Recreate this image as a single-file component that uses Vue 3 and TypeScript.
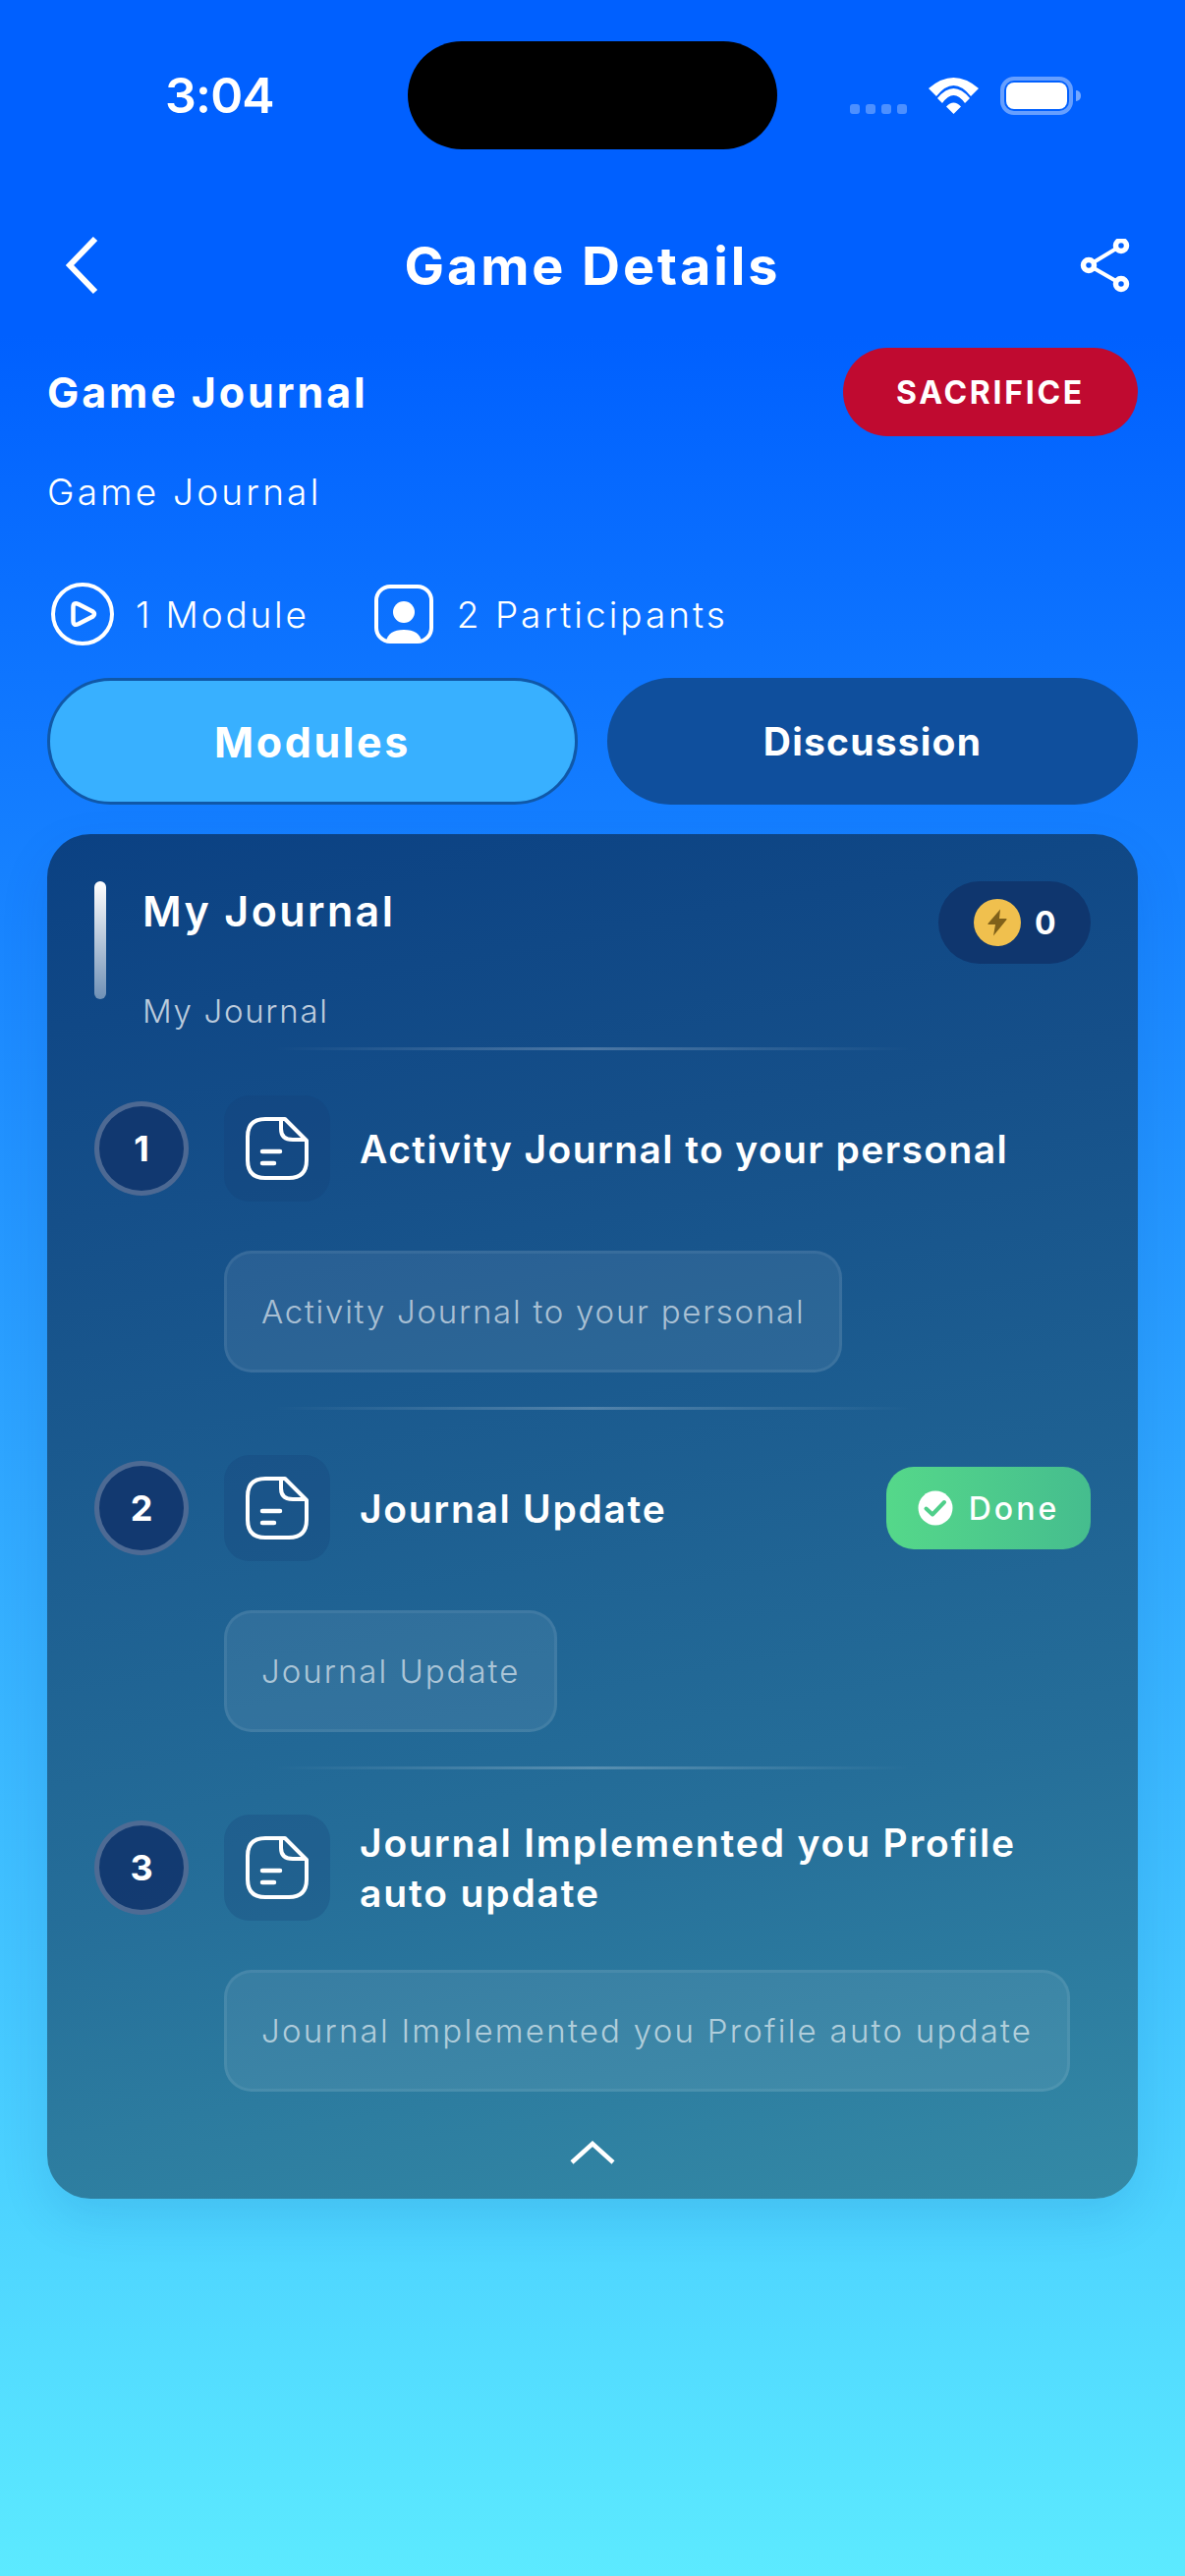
<script setup lang="ts">
interface Step {
  n: number
  title: string
  note: string
  done?: boolean
}
const steps: Step[] = [
  { n: 1, title: 'Activity Journal to your personal', note: 'Activity Journal to your personal' },
  { n: 2, title: 'Journal Update', note: 'Journal Update', done: true },
  { n: 3, title: 'Journal Implemented you Profile auto update', note: 'Journal Implemented you Profile auto update' }
]
</script>

<template>
  <div class="page">
    <div class="status">
      <span class="time">3:04</span>
      <div class="island"></div>
      <div class="sys">
        <div class="dots"><i></i><i></i><i></i><i></i></div>
        <svg class="wifi" viewBox="0 0 51 37" width="51" height="37">
          <path d="M0 11 Q25.500 -11 51 11 L43 19 Q25.500 -3 8 19 Z" fill="#fff" />
          <path d="M9 21 Q25.500 1 42 21 L37 26 Q25.500 10 14 26 Z" fill="#fff" />
          <path d="M18 29.500 Q25.500 21.500 33 29.500 L25.500 37 Z" fill="#fff" />
        </svg>
        <div class="battery"><div class="fill"></div></div>
        <div class="cap"></div>
      </div>
    </div>

    <header class="nav">
      <svg width="40" height="60" viewBox="0 0 40 60">
        <path d="M33 2 L7 29 L33 56" fill="none" stroke="#fff" stroke-width="6" />
      </svg>
      <h1>Game Details</h1>
      <svg width="52" height="56" viewBox="0 0 52 56">
        <g fill="none" stroke="#fff">
          <path d="M9 27 L42 7 M9 27 L42 46" stroke-width="4" />
          <circle cx="42" cy="7" r="5.500" stroke-width="5.500" fill="#0060ff" />
          <circle cx="9" cy="27" r="5.500" stroke-width="5.500" fill="#0060ff" />
          <circle cx="42" cy="46" r="5.500" stroke-width="5.500" fill="#0060ff" />
        </g>
      </svg>
    </header>

    <section class="head">
      <h2>Game Journal</h2>
      <span class="tag">SACRIFICE</span>
    </section>
    <p class="desc">Game Journal</p>

    <div class="stats">
      <div class="stat">
        <svg width="64" height="64" viewBox="0 0 64 64">
          <circle cx="32" cy="32" r="30" fill="none" stroke="#fff" stroke-width="4" />
          <path d="M22.500 25 Q22.500 19.500 28 22 L42.500 29.500 Q45.500 32 42.500 34.500 L28 42 Q22.500 44.500 22.500 39 Z" fill="none" stroke="#fff" stroke-width="4.500" stroke-linejoin="round" />
        </svg>
        <span>1 Module</span>
      </div>
      <div class="stat second">
        <svg width="60" height="60" viewBox="0 0 60 60">
          <rect x="2" y="2" width="56" height="56" rx="14" fill="none" stroke="#fff" stroke-width="4" />
          <circle cx="30" cy="28" r="11" fill="#fff" />
          <path d="M12 58 Q14 46 30 46 Q46 46 48 58 Z" fill="#fff" />
        </svg>
        <span>2 Participants</span>
      </div>
    </div>

    <div class="tabs">
      <div class="tab active">Modules</div>
      <div class="tab">Discussion</div>
    </div>

    <main class="card">
      <div class="card-head">
        <div class="bar"></div>
        <div class="card-titles">
          <h3>My Journal</h3>
          <p>My Journal</p>
        </div>
        <div class="chip">
          <span class="coin">
            <svg width="20" height="28" viewBox="0 0 20 28">
              <path d="M13 0.500 L0.500 15 Q0 16 1.500 16 L8 16 L6 27.500 L19.500 11 Q20 10 18.500 10 L12 10 Z" fill="#80611a" />
            </svg>
          </span>
          <b>0</b>
        </div>
      </div>

      <template v-for="s in steps" :key="s.n">
        <div class="rule"></div>
        <div class="step">
          <div class="step-top">
            <div class="num"><span>{{ s.n }}</span></div>
            <div class="tile">
              <svg width="68" height="68" viewBox="0 0 68 68">
                <path d="M42 4 H22 Q4 4 4 22 V46 Q4 64 22 64 H46 Q64 64 64 46 V26 Z" fill="none" stroke="#fff" stroke-width="4" stroke-linejoin="round" />
                <path d="M38 4 V14 Q38 25 50 25 H64" fill="none" stroke="#fff" stroke-width="4" />
                <path d="M19 37 H37 M19 49 H31" fill="none" stroke="#fff" stroke-width="4.500" stroke-linecap="round" />
              </svg>
            </div>
            <div class="step-title" :class="'title' + s.n">{{ s.title }}</div>
            <div v-if="s.done" class="done">
              <svg width="36" height="36" viewBox="0 0 36 36">
                <circle cx="18" cy="18" r="17.500" fill="#fff" />
                <path d="M8.500 18.500 L15 24.500 L27 12" fill="none" stroke="#4fcf8a" stroke-width="4" stroke-linecap="round" stroke-linejoin="round" />
              </svg>
              <span>Done</span>
            </div>
          </div>
          <div class="note" :class="'note' + s.n">{{ s.note }}</div>
        </div>
      </template>

      <div class="collapse">
        <svg width="46" height="24" viewBox="0 0 46 24">
          <path d="M2 22 L23 3 L44 22" fill="none" stroke="#fff" stroke-width="4.500" />
        </svg>
      </div>
    </main>
  </div>
</template>

<style>
html, body { margin: 0; padding: 0; }
</style>

<style scoped>
* { box-sizing: border-box; }
.page {
  width: 1206px;
  height: 2622px;
  overflow: hidden;
  padding: 0 48px;
  background: linear-gradient(180deg, #0060ff 13%, #5ceaff 100%);
  font-family: Inter, "Noto Sans", sans-serif;
  color: #fff;
}
.status {
  height: 152px;
  margin: 0 -48px;
  padding: 42px 106px 0 168px;
  display: flex;
  justify-content: space-between;
  position: relative;
}
.time {
  font-weight: 600;
  font-size: 50px;
  line-height: 50px;
  margin-top: 30px;
  letter-spacing: -0.8px;
}
.island {
  position: absolute;
  left: 415px;
  top: 42px;
  width: 376px;
  height: 110px;
  border-radius: 55px;
  background: #000;
}
.sys {
  display: flex;
  align-items: center;
  height: 39px;
  margin-top: 36px;
}
.dots { display: flex; gap: 6px; align-self: flex-end; margin-right: 22px; margin-bottom: 1px; }
.dots i {
  width: 10px;
  height: 10px;
  border-radius: 3px;
  background: rgba(255,255,255,.3);
}
.wifi { margin-right: 22px; }
.battery {
  width: 74px;
  height: 39px;
  border: 4px solid rgba(255,255,255,.4);
  border-radius: 14px;
  padding: 2px;
}
.fill { height: 100%; background: #fff; border-radius: 8px; }
.cap {
  width: 5px;
  height: 11px;
  border-radius: 0 6px 6px 0;
  margin-left: 3px;
  background: rgba(255,255,255,.45);
}
.nav {
  height: 60px;
  margin-top: 89px;
  display: flex;
  align-items: center;
  justify-content: space-between;
  padding: 0 7px 0 16px;
}
.nav h1 {
  margin: 0 0 0 3px;
  font-size: 54px;
  font-weight: 700;
  letter-spacing: 2.9px;
  line-height: 60px;
}
.head {
  margin-top: 53px;
  height: 90px;
  display: flex;
  align-items: center;
  justify-content: space-between;
}
.head h2 {
  margin: 0;
  font-size: 43px;
  font-weight: 700;
  letter-spacing: 2.9px;
}
.tag {
  width: 300px;
  height: 90px;
  border-radius: 45px;
  background: #c00a30;
  display: flex;
  align-items: center;
  justify-content: center;
  font-size: 32px;
  font-weight: 700;
  letter-spacing: 2.7px;
}
.desc {
  margin: 34px 0 0;
  font-size: 37px;
  line-height: 46px;
  font-weight: 300;
  letter-spacing: 3.2px;
}
.stats {
  margin-top: 68px;
  height: 66px;
  display: flex;
  align-items: center;
  padding-left: 4px;
}
.stat {
  display: flex;
  align-items: center;
  gap: 22px;
  font-size: 37px;
  font-weight: 300;
  letter-spacing: 2.8px;
}
.second { margin-left: 66px; gap: 24px; letter-spacing: 3px; }
.tabs {
  margin-top: 32px;
  display: flex;
  gap: 30px;
}
.tab {
  width: 540px;
  height: 129px;
  border-radius: 65px;
  background: #0f4f9d;
  display: flex;
  align-items: center;
  justify-content: center;
  font-size: 39px;
  font-weight: 700;
  letter-spacing: 1.2px;
}
.tab.active {
  background: #38b0ff;
  border: 3px solid #1058a8;
  font-size: 43px;
  letter-spacing: 2.6px;
}
.card {
  margin-top: 30px;
  height: 1389px;
  border-radius: 44px;
  padding: 48px 48px 0;
  background: linear-gradient(170deg, #0b4183 0%, #154f89 25%, #256e99 70%, #348aa6 100%);
  box-shadow: 0 20px 50px rgba(0, 60, 140, .12);
}
.card-head {
  display: flex;
  align-items: flex-start;
  height: 169px;
}
.bar {
  width: 12px;
  height: 120px;
  border-radius: 6px;
  background: linear-gradient(180deg, #fff 0%, rgba(255,255,255,.4) 100%);
}
.card-titles { margin-left: 38px; flex: 1; }
.card-titles h3 {
  margin: 0 0 0 -1px;
  font-size: 43px;
  line-height: 60px;
  font-weight: 600;
  letter-spacing: 2.4px;
}
.card-titles p {
  margin: 52px 0 0 -1px;
  font-size: 33px;
  line-height: 40px;
  font-weight: 300;
  letter-spacing: 1.7px;
  color: rgba(255,255,255,.72);
}
.chip {
  width: 155px;
  height: 84px;
  border-radius: 42px;
  background: #0f366e;
  display: flex;
  align-items: center;
  padding-left: 36px;
  gap: 14px;
}
.coin {
  width: 48px;
  height: 48px;
  border-radius: 50%;
  background: #f0c04e;
  display: flex;
  align-items: center;
  justify-content: center;
}
.chip b { font-size: 32px; font-weight: 700; }
.rule {
  height: 3px;
  background: linear-gradient(90deg, rgba(255,255,255,0) 18%, rgba(255,255,255,.24) 50%, rgba(255,255,255,0) 82%);
}
.step {
  padding-top: 46px;
  padding-bottom: 35px;
}
.step-top {
  display: flex;
  align-items: center;
  height: 108px;
}
.num {
  width: 96px;
  height: 96px;
  border-radius: 50%;
  border: 5px solid rgba(255,255,255,.25);
  background: rgba(17, 54, 110, .92);
  display: flex;
  align-items: center;
  justify-content: center;
  font-size: 36px;
  font-weight: 700;
  flex: none;
}
.tile {
  width: 108px;
  height: 108px;
  margin-left: 36px;
  border-radius: 26px;
  background: rgba(18, 58, 114, .25);
  display: flex;
  align-items: center;
  justify-content: center;
  flex: none;
}
.step-title {
  margin-left: 30px;
  flex: 1;
  font-size: 39px;
  line-height: 51px;
  font-weight: 600;
}
.title1 { letter-spacing: 1.4px; }
.title2 { letter-spacing: 1.7px; }
.title3 { letter-spacing: 1.85px; }
.done {
  width: 208px;
  height: 84px;
  border-radius: 28px;
  background: linear-gradient(90deg, #55d88a, #45bd8e);
  display: flex;
  align-items: center;
  justify-content: center;
  gap: 16px;
  font-size: 32px;
  font-weight: 500;
  letter-spacing: 3px;
  flex: none;
}
.note {
  margin: 50px 0 0 132px;
  width: fit-content;
  height: 124px;
  padding: 0 35px;
  display: flex;
  align-items: center;
  border-radius: 28px;
  border: 3px solid rgba(255,255,255,.07);
  background: rgba(255,255,255,.08);
  font-size: 33px;
  font-weight: 300;
  color: rgba(255,255,255,.62);
}
.note1 { letter-spacing: 1.75px; }
.note2 { letter-spacing: 2px; }
.note3 { letter-spacing: 2.25px; }
.collapse {
  margin-top: 15px;
  display: flex;
  justify-content: center;
}
</style>
